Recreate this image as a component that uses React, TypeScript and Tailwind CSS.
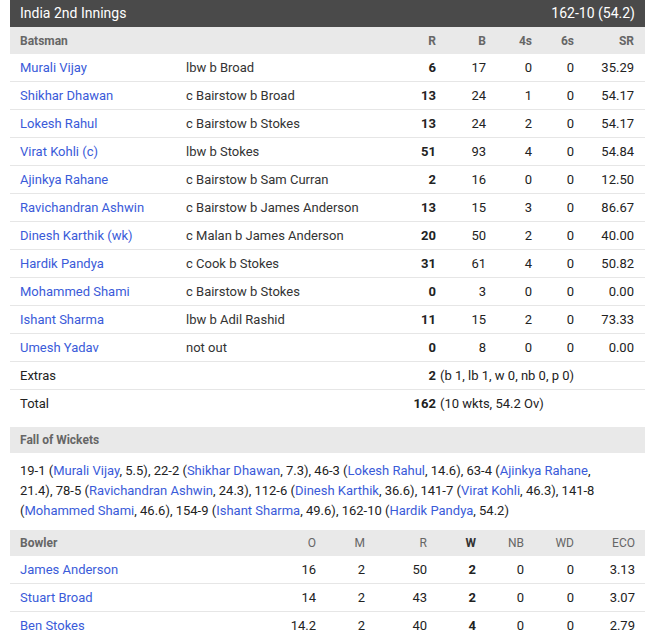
import React from "react";

const batting = [
  { name: "Murali Vijay", out: "lbw b Broad", r: 6, b: 17, f: 0, s: 0, sr: "35.29" },
  { name: "Shikhar Dhawan", out: "c Bairstow b Broad", r: 13, b: 24, f: 1, s: 0, sr: "54.17" },
  { name: "Lokesh Rahul", out: "c Bairstow b Stokes", r: 13, b: 24, f: 2, s: 0, sr: "54.17" },
  { name: "Virat Kohli (c)", out: "lbw b Stokes", r: 51, b: 93, f: 4, s: 0, sr: "54.84" },
  { name: "Ajinkya Rahane", out: "c Bairstow b Sam Curran", r: 2, b: 16, f: 0, s: 0, sr: "12.50" },
  { name: "Ravichandran Ashwin", out: "c Bairstow b James Anderson", r: 13, b: 15, f: 3, s: 0, sr: "86.67" },
  { name: "Dinesh Karthik (wk)", out: "c Malan b James Anderson", r: 20, b: 50, f: 2, s: 0, sr: "40.00" },
  { name: "Hardik Pandya", out: "c Cook b Stokes", r: 31, b: 61, f: 4, s: 0, sr: "50.82" },
  { name: "Mohammed Shami", out: "c Bairstow b Stokes", r: 0, b: 3, f: 0, s: 0, sr: "0.00" },
  { name: "Ishant Sharma", out: "lbw b Adil Rashid", r: 11, b: 15, f: 2, s: 0, sr: "73.33" },
  { name: "Umesh Yadav", out: "not out", r: 0, b: 8, f: 0, s: 0, sr: "0.00" },
];

const bowling = [
  { name: "James Anderson", o: "16", m: 2, r: 50, w: 2, nb: 0, wd: 0, eco: "3.13" },
  { name: "Stuart Broad", o: "14", m: 2, r: 43, w: 2, nb: 0, wd: 0, eco: "3.07" },
  { name: "Ben Stokes", o: "14.2", m: 2, r: 40, w: 4, nb: 0, wd: 0, eco: "2.79" },
];

const fow: [string, string, string][] = [
  ["19-1", "Murali Vijay", "5.5"],
  ["22-2", "Shikhar Dhawan", "7.3"],
  ["46-3", "Lokesh Rahul", "14.6"],
  ["63-4", "Ajinkya Rahane", "21.4"],
  ["78-5", "Ravichandran Ashwin", "24.3"],
  ["112-6", "Dinesh Karthik", "36.6"],
  ["141-7", "Virat Kohli", "46.3"],
  ["141-8", "Mohammed Shami", "46.6"],
  ["154-9", "Ishant Sharma", "49.6"],
  ["162-10", "Hardik Pandya", "54.2"],
];

const bat = "grid grid-cols-[176px_200px_50px_50px_46px_42px_60px] pr-[11px]";
const bowl = "grid grid-cols-[256px_50px_49px_62px_49px_48px_50px_61px] pr-[10px]";
const link = "text-[#3a5bd9]";

export default function App() {
  return (
    <div className="bg-white w-[651px] h-[636px] overflow-hidden text-[13px] text-[#222] font-['Roboto',sans-serif]">
      <div className="ml-[10px] w-[635px]">
        <div className="h-[27px] bg-[#4a4a4a] text-white text-[14px] flex items-center justify-between px-[10px]">
          <span>India 2nd Innings</span>
          <span>162-10 (54.2)</span>
        </div>

        <div className={`${bat} h-[27px] items-center bg-[#e9e9e9] text-[#666] text-[12px] font-bold`}>
          <span className="pl-[10px]">Batsman</span>
          <span></span>
          <span className="text-right">R</span>
          <span className="text-right">B</span>
          <span className="text-right">4s</span>
          <span className="text-right">6s</span>
          <span className="text-right">SR</span>
        </div>

        {batting.map((p) => (
          <div key={p.name} className={`${bat} h-[28px] items-center border-b border-[#e6e6e6]`}>
            <span className={`pl-[10px] ${link}`}>{p.name}</span>
            <span className="text-[#333]">{p.out}</span>
            <span className="text-right font-bold">{p.r}</span>
            <span className="text-right">{p.b}</span>
            <span className="text-right">{p.f}</span>
            <span className="text-right">{p.s}</span>
            <span className="text-right">{p.sr}</span>
          </div>
        ))}

        <div className={`${bat} h-[28px] items-center border-b border-[#e6e6e6]`}>
          <span className="pl-[10px]">Extras</span>
          <span></span>
          <span className="text-right font-bold">2</span>
          <span className="col-span-4 pl-[4px] whitespace-nowrap">(b 1, lb 1, w 0, nb 0, p 0)</span>
        </div>
        <div className={`${bat} h-[28px] items-center`}>
          <span className="pl-[10px]">Total</span>
          <span></span>
          <span className="text-right font-bold">162</span>
          <span className="col-span-4 pl-[4px] whitespace-nowrap">(10 wkts, 54.2 Ov)</span>
        </div>

        <div className="mt-[9px] h-[26px] flex items-center px-[10px] bg-[#e9e9e9] text-[#666] text-[12px] font-bold">
          Fall of Wickets
        </div>
        <p className="pl-[10px] pr-[24px] pt-[8px] pb-[9px] leading-[20px]">
          {fow.map(([score, name, over], i) => (
            <React.Fragment key={score}>
              {score} (<span className={link}>{name}</span>, {over}){i < fow.length - 1 ? ", " : ""}
            </React.Fragment>
          ))}
        </p>

        <div className={`${bowl} h-[26px] items-center bg-[#e9e9e9] text-[#666] text-[12px] font-bold`}>
          <span className="pl-[10px]">Bowler</span>
          <span className="text-right font-normal">O</span>
          <span className="text-right font-normal">M</span>
          <span className="text-right font-normal">R</span>
          <span className="text-right text-[#333]">W</span>
          <span className="text-right font-normal">NB</span>
          <span className="text-right font-normal">WD</span>
          <span className="text-right font-normal">ECO</span>
        </div>
        {bowling.map((b) => (
          <div key={b.name} className={`${bowl} h-[28px] items-center border-b border-[#e6e6e6]`}>
            <span className={`pl-[10px] ${link}`}>{b.name}</span>
            <span className="text-right">{b.o}</span>
            <span className="text-right">{b.m}</span>
            <span className="text-right">{b.r}</span>
            <span className="text-right font-bold">{b.w}</span>
            <span className="text-right">{b.nb}</span>
            <span className="text-right">{b.wd}</span>
            <span className="text-right">{b.eco}</span>
          </div>
        ))}
      </div>
    </div>
  );
}
